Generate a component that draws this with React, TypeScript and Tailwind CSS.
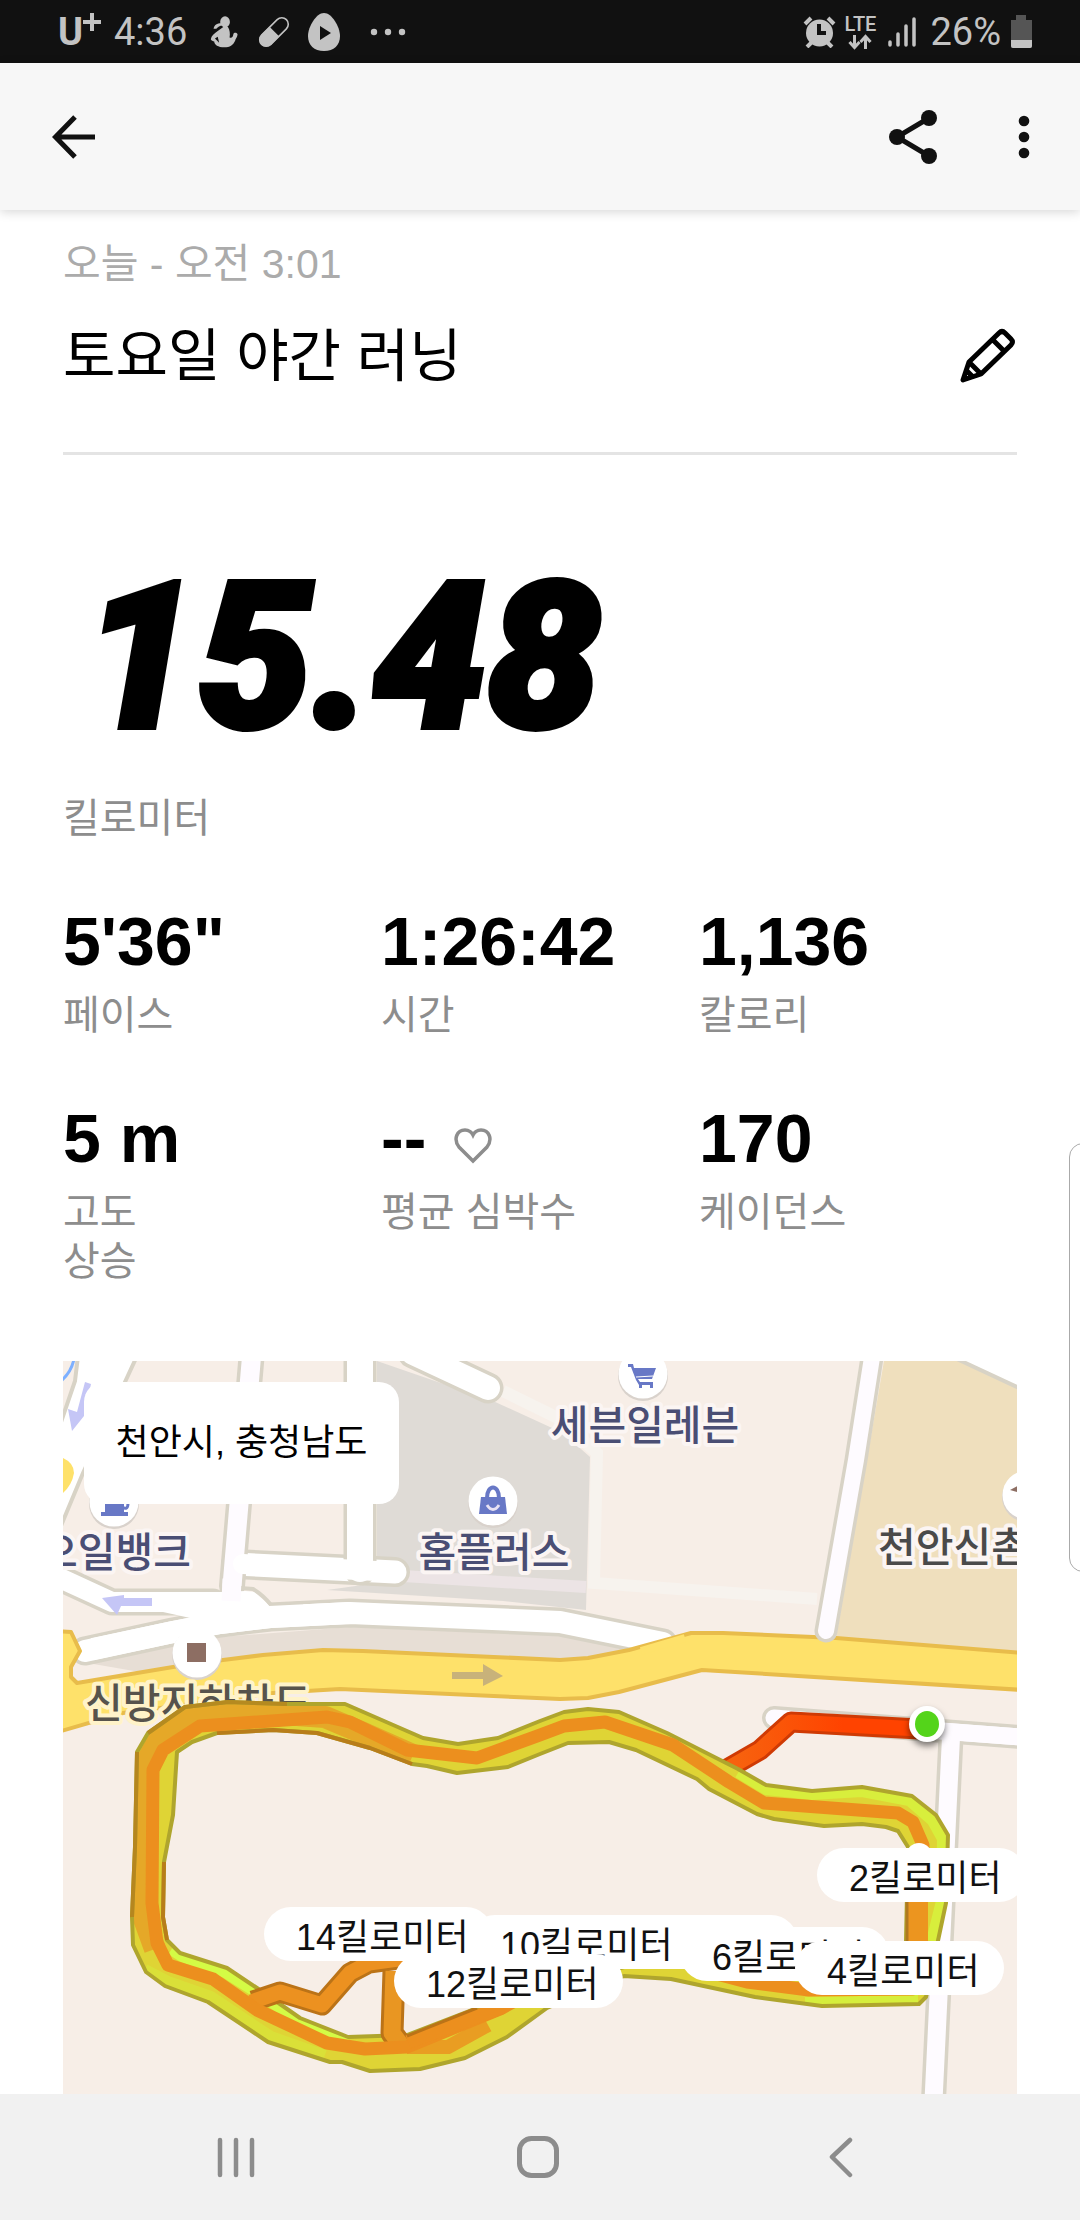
import type { ReactNode } from 'react';

type Stat = {
  value: string;
  label: string;
  heart?: boolean;
};

type Marker = {
  label: string;
  className: string;
};

const stats: Stat[] = [
  { value: '5\'36"', label: '페이스' },
  { value: '1:26:42', label: '시간' },
  { value: '1,136', label: '칼로리' },
  { value: '5 m', label: '고도\n상승' },
  { value: '--', label: '평균 심박수', heart: true },
  { value: '170', label: '케이던스' },
];

const markers: Marker[] = [
  { label: '14킬로미터', className: 'left-[201px] top-[546px]' },
  { label: '', className: 'left-[526px] top-[554px] w-[209px]' },
  { label: '10킬로미터', className: 'left-[405px] top-[554px]' },
  { label: '12킬로미터', className: 'left-[331px] top-[593px]' },
  { label: '6킬로미터', className: 'left-[617px] top-[566px]' },
  { label: '4킬로미터', className: 'left-[732px] top-[580px]' },
  { label: '2킬로미터', className: 'left-[754px] top-[487px]' },
];

function StatusBar() {
  return (
    <div className="flex h-[63px] items-center justify-between bg-[#111] pr-12 pl-[58px] font-[Roboto,sans-serif] text-[38px] text-[#c3c3c3]">
      <div className="flex items-center">
        <span className="flex w-14 items-center">
          <span className="text-[38px] leading-none font-bold">U</span>
          <svg className="mb-5 h-[18px] w-[18px]" viewBox="0 0 18 18" fill="currentColor">
            <path d="M7 0h4v7h7v4h-7v7H7v-7H0V7h7z" />
          </svg>
        </span>
        <span className="w-[96px] leading-none">4:36</span>
        <svg className="h-8 w-7" viewBox="0 0 78 92" fill="currentColor">
          <ellipse cx="42" cy="17" rx="14" ry="16" />
          <path d="M9 37c2-11 10-16 22-16l5 5c-10 3-14 5-19 11z" />
          <path d="M38 31h12c6 10 7 20 5 31 7 2 10-2 11-10 1-5 11-5 12 1-1 9-6 12-7 18-6 13-15 19-31 19-18 0-29-8-29-17-4 0-8-2-10-6 2-10 9-16 22-25z" />
          <path d="M21 60l4 17-12-12z" fill="#111" />
        </svg>
        <svg className="ml-5 h-8 w-8" viewBox="0 0 32 32">
          <g transform="rotate(45 16 16)" fill="none" stroke="currentColor">
            <rect x="9.500" y="-1.500" width="13" height="35" rx="6.500" strokeWidth="1.600" />
            <path d="M9.500 16h13v11a6.500 6.500 0 0 1-13 0z" fill="currentColor" />
          </g>
        </svg>
        <svg className="ml-[18px] h-[38px] w-8" viewBox="0 0 32 38">
          <path d="M16 0c8 0 16 14 16 23s-6 15-16 15S0 32 0 23 8 0 16 0z" fill="currentColor" />
          <path d="M12 13v14l11-7z" fill="#111" />
        </svg>
        <svg className="ml-[30px] h-2 w-[36px]" viewBox="0 0 36 8" fill="currentColor">
          <circle cx="4" cy="4" r="3.200" />
          <circle cx="18" cy="4" r="3.200" />
          <circle cx="32" cy="4" r="3.200" />
        </svg>
      </div>
      <div className="flex items-center">
        <svg className="h-8 w-[33px]" viewBox="0 0 33 32" fill="currentColor">
          <circle cx="16.500" cy="17" r="13.500" />
          <path d="M2 8l6-6M31 8l-6-6M4 31l5-5M29 31l-5-5" stroke="currentColor" strokeWidth="4" />
          <path d="M16 8v9h7" fill="none" stroke="#111" strokeWidth="4" />
        </svg>
        <div className="ml-2 flex w-8 flex-col items-center">
          <span className="text-[20px] leading-5 font-medium">LTE</span>
          <svg className="h-4 w-6" viewBox="0 0 24 16" fill="none" stroke="currentColor" strokeWidth="3">
            <path d="M6.500 1v12M1.500 8l5 5.500 5-5.500M17.500 15V3M12.500 8l5-5.500 5 5.500" />
          </svg>
        </div>
        <svg className="ml-3 h-8 w-7" viewBox="0 0 28 32" fill="none" stroke="currentColor" strokeWidth="3.500" strokeLinecap="round">
          <path d="M2 26v3M10 18v11M18 10v19M26 3v26" />
        </svg>
        <span className="ml-[14px] leading-none">26%</span>
        <svg className="ml-[10px] h-[33px] w-[21px]" viewBox="0 0 21 33">
          <path d="M5 0h10v5h6v26a2 2 0 0 1-2 2H2a2 2 0 0 1-2-2V5h5z" fill="#555" />
          <path d="M0 25h21v6a2 2 0 0 1-2 2H2a2 2 0 0 1-2-2z" fill="currentColor" />
        </svg>
      </div>
    </div>
  );
}

function Header() {
  return (
    <header className="z-10 flex h-[147px] items-center bg-[#f7f7f7] pr-10 pl-[52px] text-[#111] shadow-[0_2px_10px_rgba(0,0,0,0.16)]">
      <button type="button" aria-label="뒤로">
        <svg className="h-11 w-11" viewBox="0 0 44 44" fill="none" stroke="currentColor" strokeWidth="5">
          <path d="M43 22H5M23 2L3.500 22 23 42" />
        </svg>
      </button>
      <button type="button" aria-label="공유" className="ml-auto">
        <svg className="h-[54px] w-12" viewBox="0 0 48 54" fill="currentColor">
          <path d="M40 8L8 27l32 19" fill="none" stroke="currentColor" strokeWidth="5" />
          <circle cx="40" cy="8" r="8" />
          <circle cx="8" cy="27" r="8" />
          <circle cx="40" cy="46" r="8" />
        </svg>
      </button>
      <button type="button" aria-label="더보기" className="ml-[71px]">
        <svg className="h-11 w-8" viewBox="0 0 32 44" fill="currentColor">
          <circle cx="16" cy="6" r="5.300" />
          <circle cx="16" cy="22" r="5.300" />
          <circle cx="16" cy="38" r="5.300" />
        </svg>
      </button>
    </header>
  );
}

function StatItem({ value, label, heart }: Stat) {
  return (
    <div>
      <dd className="flex h-[84px] items-center text-[68px] font-bold">
        {value}
        {heart && (
          <svg className="mt-4 ml-7 h-9 w-[38px] text-[#8d8d8d]" viewBox="0 0 38 36" fill="none" stroke="currentColor" strokeWidth="3.500">
            <path d="M19 33L5 19C-1 11 3 2 11 2c4 0 7 3 8 5 1-2 4-5 8-5 8 0 12 9 6 17z" />
          </svg>
        )}
      </dd>
      <dt className="mt-2 text-[40px] leading-[49px] whitespace-pre-line text-[#8d8d8d]">{label}</dt>
    </div>
  );
}

/* 도로: 테두리 선 위에 안쪽 선을 겹쳐 그린다 */
function Road({ d, width, color = '#fff' }: { d: string; width: number; color?: string }) {
  return (
    <g fill="none" strokeLinecap="round" strokeLinejoin="round">
      <path d={d} stroke="#d8d3c6" strokeWidth={width + 7} />
      <path d={d} stroke={color} strokeWidth={width} />
    </g>
  );
}

function Poi({ x, y, children }: { x: number; y: number; children?: ReactNode }) {
  return (
    <g transform={`translate(${x} ${y})`}>
      <circle cy="2" r="25" fill="#d9d2cc" />
      <circle r="24.500" fill="#fff" />
      {children}
    </g>
  );
}

const loop =
  'M85 372L74 391 72 486 69 556 70 584 83 611 102 625 145 641 205 681 267 701 279 701 307 710 357 708 402 697 444 676 484 647 561 615 608 618 692 636 759 645 856 643 863 636 883 542 885 474 873 454 849 435 799 426 749 430 703 424 675 408 604 372 556 351 525 348 501 351 477 360 435 377 395 383 360 377 282 343 224 343 165 341 122 346z' +
  'M114 391L110 454 101 501 100 556 104 579 117 592 164 607 194 627 237 657 285 676 344 674 414 647 561 606 618 604 750 612 843 610 843 579 845 486 835 470 823 466 799 463 761 465 711 458 694 453 646 428 634 418 573 389 546 381 505 382 477 393 445 406 394 412 364 405 349 403 307 387 254 372 210 369 154 372 129 381z';

// 12km 표시부터 8km 표시 사이는 끊어서 그린다
const core =
  'M650 612L684 621 746 629 850 628 855 579 860 484 850 461 835 452 701 442 666 421 610 384 542 361 501 365 477 374 414 397 344 389 287 361 264 356 137 365 100 389 90 409 89 542 94 582 105 604 150 618 194 649 264 682 302 688 344 686 437 648 470 630';

function MapDrawing() {
  return (
    <svg className="h-full w-full" viewBox="0 0 954 733" preserveAspectRatio="xMidYMid slice">
      <defs>
        <linearGradient id="startRun" gradientUnits="userSpaceOnUse" x1="673" y1="0" x2="780" y2="0">
          <stop offset="0" stopColor="#f7620e" />
          <stop offset="1" stopColor="#ff4300" />
        </linearGradient>
        <clipPath id="loopArea">
          <path d={loop} clipRule="evenodd" />
        </clipPath>
      </defs>
      <rect width="954" height="733" fill="#f7eee7" />

      {/* 구역 */}
      <path d="M314 0L430 40 500 72 527 96 523 249 440 240 264 229 314 222z" fill="#dfdbd6" />
      <path d="M340 215L523 226" stroke="#ece4e5" strokeWidth="12" />
      <path d="M440 30L497 58 534 92 531 222 754 238" fill="none" stroke="#f7f3ee" strokeWidth="12" />
      <path d="M821 0H897L954 27V292L773 277z" fill="#efdfbd" />
      <path d="M897 0L954 27V0z" fill="#fff" />
      <path d="M894 -2L956 27" stroke="#d8d3c6" strokeWidth="4" />
      <path d="M13 300L157 276 287 266 508 275 590 290 508 310 100 315z" fill="#e7ded5" />

      {/* 흰색 도로 */}
      <path d="M15 -5L12 20 -5 70V172L20 112 74 -5z" fill="#fff" stroke="#d8d3c6" strokeWidth="4" />
      <path d="M11 -2C9 8 5 14 -2 20" fill="none" stroke="#7db0ff" strokeWidth="3" />
      <path d="M0 97q11 5 11 15-2 12-11 20z" fill="#fee16a" />
      <Road d="M350 -8L425 27" width={24} />
      <Road d="M-14 212L49 241 150 241" width={20} />
      <Road d="M22 290L110 271 157 262 207 256 287 252 497 261 600 282" width={22} />
      <Road d="M173 203L332 211" width={23} />
      <Road d="M297 -20V208" width={26} />
      <Road d="M189 -10L169 225" width={19} color="#fefbff" />
      <path d="M100 231L160 231 182 230 192 231 208 246 240 243V262H150L100 251z" fill="#fff" />
      <path d="M177 227L190 228Q200 234 209 245L240 242" fill="none" stroke="#d8d3c6" strokeWidth="4" />
      <path d="M180 203L332 211M297 190V210" stroke="#fff" strokeWidth="20" strokeLinecap="round" />
      <path d="M169 218L168 240" stroke="#fefbff" strokeWidth="19" />
      <path d="M30 288L110 271 157 262 207 256 287 252" fill="none" stroke="#fff" strokeWidth="22" />

      {/* 노란 간선도로 */}
      <path
        d="M-5 270L8 271 17 290 8 306 8 316 14 322 110 306 160 299 200 294 260 289 300 290 497 299 525 297 566 289 628 272 660 272 773 277 960 292V329L639 309 556 331 525 337 497 338 277 328 210 332 60 352 -5 371z"
        fill="#fee16a"
        stroke="#e8bc4b"
        strokeWidth="4"
        strokeLinejoin="round"
      />
      <path d="M578 290L622 277" stroke="#fee16a" strokeWidth="8" />
      <Road d="M810 -10L793 99 763 270" width={16} color="#fefbff" />
      <Road d="M711 357L970 377" width={17} color="#fefbff" />
      <Road d="M888 376L870 750" width={18} color="#fefbff" />
      <path d="M850 368L970 377" stroke="#fefbff" strokeWidth="17" />

      {/* 일방통행 화살표 */}
      <g fill="#c5c6f6">
        <path d="M22 21L28 23 21 55 9 70 5 48 14 51z" />
        <path d="M89 237V245H58L54 254 39 237 61 234V237z" />
      </g>
      <path d="M389 311H420V303L440 315 420 325V318H389z" fill="#c8b27a" />

      {/* 장소 */}
      <Poi x={51} y={141}>
        <path d="M-9 -10H10V10H14V14H-13V10H-9z" fill="#6878c6" />
        <path d="M8 5q6 4 6-4" fill="none" stroke="#6878c6" strokeWidth="3" />
      </Poi>
      <Poi x={430} y={140}>
        <path d="M-12 -4H12L14 13H-14z" fill="#6878c6" />
        <path d="M-6 -3C-6 -17 6 -17 6 -3" fill="none" stroke="#6878c6" strokeWidth="4" />
        <path d="M-6 4q6 9 12 0" fill="none" stroke="#e8e2f4" strokeWidth="3" />
      </Poi>
      <Poi x={580} y={13}>
        <path d="M-15 -10H-10L-9 -6H13L9 5H-5L-3 8H10V14H7V11H-1V14H-4V11L-7 6-12 -7H-15z" fill="#6878c6" />
        <path d="M-7 3L10 2" stroke="#fff" strokeWidth="1" />
      </Poi>
      <Poi x={134} y={292}>
        <rect x="-10" y="-10" width="19" height="19" fill="#8d6e63" />
      </Poi>
      <Poi x={964} y={134}>
        <path d="M-17 -5L-6 -11V-2z" fill="#8d6e63" />
      </Poi>
      <g
        className="font-['Noto_Sans_CJK_KR',sans-serif] text-[41px] font-medium"
        stroke="#fbf5f3"
        strokeWidth="8"
        strokeLinejoin="round"
        paintOrder="stroke"
        fill="#4a4e74"
      >
        <text x="128" y="206" textAnchor="end">오일뱅크</text>
        <text x="431" y="206" textAnchor="middle">홈플러스</text>
        <text x="582" y="79" textAnchor="middle">세븐일레븐</text>
        <text x="815" y="201" fill="#4a4a4a">천안신촌</text>
        <text x="22" y="357" fill="#57534c" stroke="#fff3c9">신방지하차도</text>
      </g>

      {/* 러닝 경로 */}
      <g fill="none" strokeLinejoin="round">
        <path d="M664 408L697 389 728 361 856 368" stroke="#cf3a04" strokeWidth="21" />
        <path d="M664 408L697 389 728 361 856 368" stroke="url(#startRun)" strokeWidth="15" />
        <path d={loop} fill="#dfd435" fillRule="evenodd" />
        <g clipPath="url(#loopArea)">
          <path d="M675 412L703 429 749 434 799 431 846 440 869 460 879 478 878 540 868 580" stroke="#d8ee3c" strokeWidth="10" />
          <path d="M108 589L119 596 162 612 200 636 237 662 285 680" stroke="#d4fb45" strokeWidth="10" />
          <path d="M82 608L105 620 148 635 208 675 262 694" stroke="#dae038" strokeWidth="10" />
          <path d="M742 640L855 638" stroke="#d6ee3c" strokeWidth="8" />
          <path d="M92 588L80 555 84 400 97 376 130 354 190 351 262 356 300 372 350 394" stroke="#e5a828" strokeWidth="22" />
          <path d="M344 686L385 686 425 664" stroke="#e99d22" strokeWidth="14" />
        </g>
        <path d={loop} stroke="#afa52d" strokeWidth="4" />
        <path d="M74 391L72 486 69 556" stroke="#b5861f" strokeWidth="4" />
        <path d="M85 372L122 346 165 341 224 343" stroke="#b58a20" strokeWidth="4" />
        <path d="M104 579L100 556 101 501M154 372L210 369 254 372 307 387 349 403" stroke="#b87d1a" strokeWidth="4" />
        <path d="M190 640L217 631 259 644 287 612 306 602 350 596" stroke="#bb7317" strokeWidth="21" />
        <path d="M331 610L329 672 338 684" stroke="#bb7317" strokeWidth="23" />
        <path d="M188 641L217 631 259 644 287 612 306 602 350 596" stroke="#ec9120" strokeWidth="15" />
        <path d="M331 610L329 672 338 684" stroke="#e99622" strokeWidth="17" />
        <path d={core} stroke="#ec8f1e" strokeWidth="13" />
        <path d="M345 681L440 646" stroke="#ec8f1e" strokeWidth="14" />
        <path d="M344 675L414 647" stroke="#bb7317" strokeWidth="3" />
        <path d="M855 530V600" stroke="#ec951f" strokeWidth="20" />
        <path d="M844 530V600" stroke="#b07820" strokeWidth="3" />
      </g>
      <circle cx="856" cy="495" r="13" fill="#fff" />
      <circle className="drop-shadow-[0_4px_3px_rgba(0,0,0,0.5)]" cx="864" cy="363" r="18" fill="#fff" />
      <ellipse cx="864" cy="363" rx="12" ry="13" fill="#54d41a" />
    </svg>
  );
}

function RouteMap() {
  return (
    <section className="relative h-[733px] overflow-hidden">
      <MapDrawing />
      <div className="absolute top-[21px] left-[21px] flex h-[122px] w-[315px] items-center justify-center rounded-[20px] bg-white text-[36px] text-black">
        천안시, 충청남도
      </div>
      {markers.map((marker) => (
        <span
          key={marker.className}
          className={`absolute h-[54px] rounded-full bg-white pr-6 pl-8 text-[36px] leading-[62px] whitespace-nowrap text-[#111] ${marker.className}`}
        >
          {marker.label}
        </span>
      ))}
    </section>
  );
}

function NavBar() {
  return (
    <nav className="flex h-[126px] justify-center bg-[#f1f1f1] text-[#8c8c8c]">
      <button type="button" aria-label="최근 앱" className="flex w-[302px] items-center justify-center">
        <svg className="h-[42px] w-[42px]" viewBox="0 0 42 42" fill="none" stroke="currentColor" strokeWidth="4.500" strokeLinecap="round">
          <path d="M3 4v35M19 4v35M35 4v35" />
        </svg>
      </button>
      <button type="button" aria-label="홈" className="flex w-[302px] items-center justify-center">
        <svg className="h-[42px] w-[46px]" viewBox="0 0 46 42" fill="none" stroke="currentColor" strokeWidth="5">
          <rect x="2.500" y="2.500" width="37" height="37" rx="12" />
        </svg>
      </button>
      <button type="button" aria-label="뒤로 가기" className="flex w-[302px] items-center justify-center">
        <svg className="h-[42px] w-7" viewBox="0 0 28 42" fill="none" stroke="currentColor" strokeWidth="4.500" strokeLinecap="round" strokeLinejoin="round">
          <path d="M22 4L4 21l18 18" />
        </svg>
      </button>
    </nav>
  );
}

export default function App() {
  return (
    <div className="relative flex min-h-screen flex-col overflow-hidden bg-white font-['Liberation_Sans','Noto_Sans_CJK_KR',sans-serif] text-black">
      <StatusBar />
      <Header />
      <main className="flex-1 px-[63px] pt-[30px]">
        <p className="text-[41px] leading-[48px] text-[#ababab]">오늘 - 오전 3:01</p>
        <div className="mt-9 flex items-center justify-between border-b-[3px] border-[#e4e4e4] pb-16">
          <h1 className="text-[57px] leading-[64px]">토요일 야간 러닝</h1>
          <button type="button" aria-label="이름 수정">
            <svg className="h-14 w-[58px]" viewBox="0 0 58 56" fill="none" stroke="currentColor" strokeWidth="5" strokeLinejoin="round">
              <path d="M4 52L10 34 40 5q3-3 6 0l6 6q3 3 0 6L22 46zM33 11l13 13M10 34l12 12M8 43l6 6" />
            </svg>
          </button>
        </div>
        <p className="mt-[123px] pl-5 font-[Roboto,sans-serif] text-[204px] leading-[160px] font-black italic [-webkit-text-stroke:6px_black]">15.48</p>
        <p className="mt-14 text-[40px] leading-[48px] text-[#8d8d8d]">킬로미터</p>
        <dl className="mt-[57px] mb-[75px] grid grid-cols-3 gap-y-14">
          {stats.map((stat) => (
            <div key={stat.label} className="flex flex-col">
              <StatItem {...stat} />
            </div>
          ))}
        </dl>
        <RouteMap />
      </main>
      <NavBar />
      <div className="absolute top-[1143px] -right-2 h-[429px] w-[19px] rounded-l-[14px] border border-[#aaa] bg-white" />
    </div>
  );
}
